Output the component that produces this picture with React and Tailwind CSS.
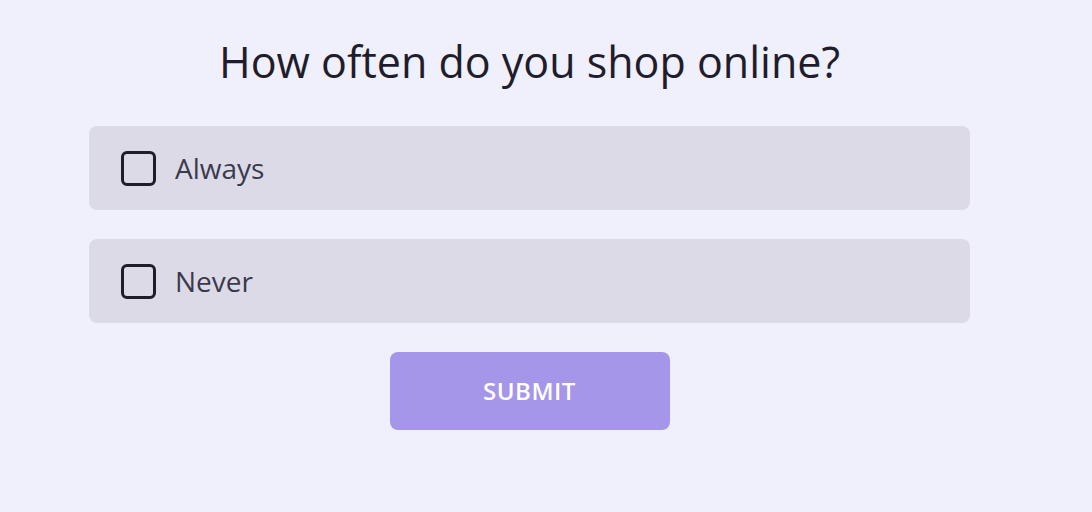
export default function App() {
  const opts = ["Always", "Never"];
  return (
    <div className="w-[1092px] h-[512px] bg-[#f0effc] overflow-hidden" style={{ fontFamily: '"Open Sans", sans-serif' }}>
      <div className="ml-[89px] w-[881px] flex flex-col items-center pt-[33px]">
        <h1 className="text-[43px] leading-[58px] h-[58px] text-[#1f1d2b] font-normal whitespace-nowrap">How often do you shop online?</h1>
        <div className="w-full flex flex-col gap-[29px] mt-[35px]">
          {opts.map((o) => (
            <label key={o} className="h-[84px] w-full rounded-[8px] bg-[#dcdae7] flex items-center pl-[32px] gap-[19px]">
              <span className="w-[35px] h-[35px] rounded-[6px] border-[3px] border-[#1f1d2b]" />
              <span className="text-[28px] text-[#3b3a4d]">{o}</span>
            </label>
          ))}
        </div>
        <button className="mt-[29px] w-[280px] h-[78px] rounded-[8px] bg-[#a596e9] text-white text-[24px] font-semibold tracking-[0.5px]">SUBMIT</button>
      </div>
    </div>
  );
}
